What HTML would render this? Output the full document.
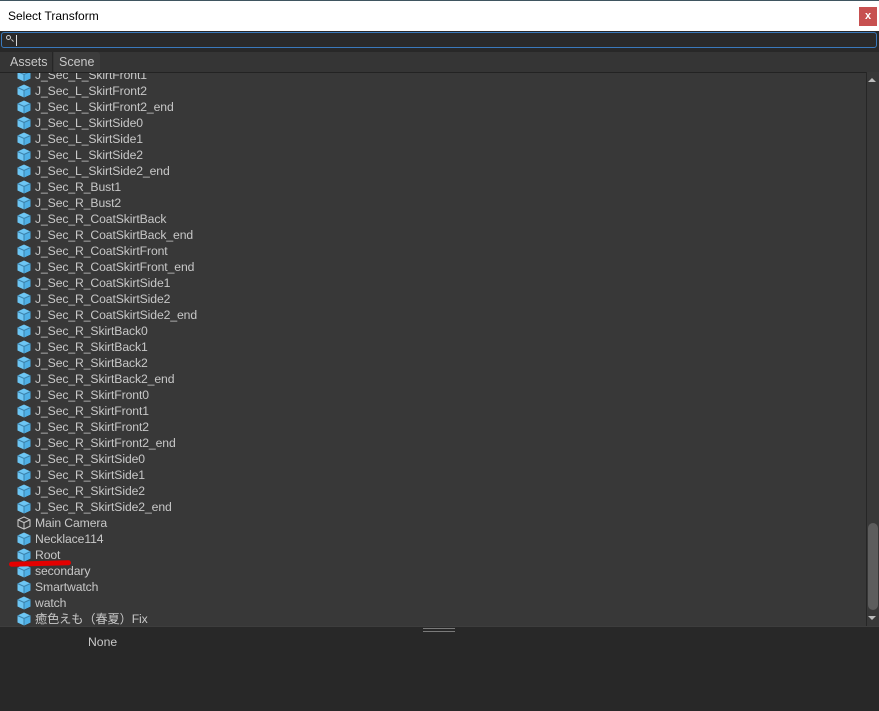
<!DOCTYPE html>
<html><head><meta charset="utf-8"><style>
*{margin:0;padding:0;box-sizing:border-box}
body{width:879px;height:711px;overflow:hidden;background:#282828;font-family:"Liberation Sans","Noto Sans CJK JP",sans-serif;position:relative}
.topline{position:absolute;left:0;top:0;width:879px;height:1px;background:#3f5560}
.title{position:absolute;left:0;top:1px;width:879px;height:30px;background:#fff}
.title span{position:absolute;left:8px;top:8px;font-size:12px;color:#000}
.close{position:absolute;left:859px;top:6px;width:18px;height:19px;background:#c75050;color:#fff;font-size:11px;font-weight:bold;text-align:center;line-height:18px}
.search{position:absolute;left:1px;top:32px;width:876px;height:16px;border:1px solid #3a79bb;border-radius:3px;background:#2a2a2a}
.search .mag{position:absolute;left:4px;top:2px;width:5px;height:5px;border:1px solid #ccc;border-radius:50%}
.search .mag:after{content:"";position:absolute;left:4px;top:4px;width:3px;height:1px;background:#ccc;transform:rotate(45deg)}
.search .caret{position:absolute;left:14px;top:2px;width:1px;height:11px;background:#ddd}
.tabs{position:absolute;left:0;top:52px;width:879px;height:20px;background:#353535}
.tab{position:absolute;top:0;height:20px;font-size:12.5px;color:#c8c8c8;line-height:21px;padding-left:10px}
.t1{left:0;width:53px;background:#353535;border-right:1px solid #262626}
.t2{left:54px;width:46px;background:#3c3c3c;padding-left:5px;border-top-right-radius:3px}
.list{position:absolute;left:0;top:72px;width:866px;height:554px;background:#383838;overflow:hidden;border-top:1px solid #232323}
.row{position:relative;height:16px;padding-left:35px;font-size:12.2px;letter-spacing:-0.1px;color:#c8c8c8;line-height:16px;white-space:nowrap}
.row svg{position:absolute;left:17px;top:1px}
.sb{position:absolute;left:866px;top:72px;width:13px;height:554px;background:#383838;border-left:1px solid #262626}
.thumb{position:absolute;left:868px;top:523px;width:10px;height:87px;background:#5d5d5d;border-radius:5px}
.up{position:absolute;left:868px;top:78px;border-left:4px solid transparent;border-right:4px solid transparent;border-bottom:4px solid #bbb}
.down{position:absolute;left:868px;top:616px;border-left:4px solid transparent;border-right:4px solid transparent;border-top:4px solid #bbb}
.bottom{position:absolute;left:0;top:626px;width:879px;height:85px;background:#282828;border-top:1px solid #3d3d3d}
.h1,.h2{position:absolute;left:423px;width:32px;height:1px;background:#7a7a7a}
.h1{top:628px}.h2{top:631px}
.none{position:absolute;left:88px;top:635px;font-size:12.2px;color:#c8c8c8}
.red{position:absolute;left:9px;top:561px;width:62px;height:5px;background:#e30000;border-radius:3px;transform:rotate(-1.5deg)}
</style></head><body>
<svg width="0" height="0" style="position:absolute"><defs>
<g id="c"><path d="M7 0.5L13.5 3.5V10.5L7 13.5L0.5 10.5V3.5Z" fill="#6cc5f3"/><path d="M7 6.5L13.5 3.5V10.5L7 13.5Z" fill="#4fb0e6"/><path d="M0.5 3.5L7 6.5L13.5 3.5M7 6.5V13.5" stroke="#3a7fa8" stroke-width="1" fill="none"/></g>
</defs></svg>
<div class="topline"></div>
<div class="title"><span>Select Transform</span><div class="close">x</div></div>
<div class="search"><div class="mag"></div><div class="caret"></div></div>
<div class="tabs"><div class="tab t1">Assets</div><div class="tab t2">Scene</div></div>
<div class="list"><div style="margin-top:-6px">
<div class="row"><svg width="14" height="14"><use href="#c"/></svg>J_Sec_L_SkirtFront1</div>
<div class="row"><svg width="14" height="14"><use href="#c"/></svg>J_Sec_L_SkirtFront2</div>
<div class="row"><svg width="14" height="14"><use href="#c"/></svg>J_Sec_L_SkirtFront2_end</div>
<div class="row"><svg width="14" height="14"><use href="#c"/></svg>J_Sec_L_SkirtSide0</div>
<div class="row"><svg width="14" height="14"><use href="#c"/></svg>J_Sec_L_SkirtSide1</div>
<div class="row"><svg width="14" height="14"><use href="#c"/></svg>J_Sec_L_SkirtSide2</div>
<div class="row"><svg width="14" height="14"><use href="#c"/></svg>J_Sec_L_SkirtSide2_end</div>
<div class="row"><svg width="14" height="14"><use href="#c"/></svg>J_Sec_R_Bust1</div>
<div class="row"><svg width="14" height="14"><use href="#c"/></svg>J_Sec_R_Bust2</div>
<div class="row"><svg width="14" height="14"><use href="#c"/></svg>J_Sec_R_CoatSkirtBack</div>
<div class="row"><svg width="14" height="14"><use href="#c"/></svg>J_Sec_R_CoatSkirtBack_end</div>
<div class="row"><svg width="14" height="14"><use href="#c"/></svg>J_Sec_R_CoatSkirtFront</div>
<div class="row"><svg width="14" height="14"><use href="#c"/></svg>J_Sec_R_CoatSkirtFront_end</div>
<div class="row"><svg width="14" height="14"><use href="#c"/></svg>J_Sec_R_CoatSkirtSide1</div>
<div class="row"><svg width="14" height="14"><use href="#c"/></svg>J_Sec_R_CoatSkirtSide2</div>
<div class="row"><svg width="14" height="14"><use href="#c"/></svg>J_Sec_R_CoatSkirtSide2_end</div>
<div class="row"><svg width="14" height="14"><use href="#c"/></svg>J_Sec_R_SkirtBack0</div>
<div class="row"><svg width="14" height="14"><use href="#c"/></svg>J_Sec_R_SkirtBack1</div>
<div class="row"><svg width="14" height="14"><use href="#c"/></svg>J_Sec_R_SkirtBack2</div>
<div class="row"><svg width="14" height="14"><use href="#c"/></svg>J_Sec_R_SkirtBack2_end</div>
<div class="row"><svg width="14" height="14"><use href="#c"/></svg>J_Sec_R_SkirtFront0</div>
<div class="row"><svg width="14" height="14"><use href="#c"/></svg>J_Sec_R_SkirtFront1</div>
<div class="row"><svg width="14" height="14"><use href="#c"/></svg>J_Sec_R_SkirtFront2</div>
<div class="row"><svg width="14" height="14"><use href="#c"/></svg>J_Sec_R_SkirtFront2_end</div>
<div class="row"><svg width="14" height="14"><use href="#c"/></svg>J_Sec_R_SkirtSide0</div>
<div class="row"><svg width="14" height="14"><use href="#c"/></svg>J_Sec_R_SkirtSide1</div>
<div class="row"><svg width="14" height="14"><use href="#c"/></svg>J_Sec_R_SkirtSide2</div>
<div class="row"><svg width="14" height="14"><use href="#c"/></svg>J_Sec_R_SkirtSide2_end</div>
<div class="row"><svg width="14" height="14"><path d="M7 1L13 3.8V10.3L7 13L1 10.3V3.8Z M1 3.8L7 6.6L13 3.8M7 6.6V13" stroke="#c4c4c4" stroke-width="1.1" fill="none"/></svg>Main Camera</div>
<div class="row"><svg width="14" height="14"><use href="#c"/></svg>Necklace114</div>
<div class="row"><svg width="14" height="14"><use href="#c"/></svg>Root</div>
<div class="row"><svg width="14" height="14"><use href="#c"/></svg>secondary</div>
<div class="row"><svg width="14" height="14"><use href="#c"/></svg>Smartwatch</div>
<div class="row"><svg width="14" height="14"><use href="#c"/></svg>watch</div>
<div class="row"><svg width="14" height="14"><use href="#c"/></svg>癒色えも（春夏）Fix</div>
</div></div>
<div class="sb"></div><div class="thumb"></div><div class="up"></div><div class="down"></div>
<div class="bottom"></div><div class="h1"></div><div class="h2"></div>
<div class="none">None</div>
<div class="red"></div>
</body></html>
